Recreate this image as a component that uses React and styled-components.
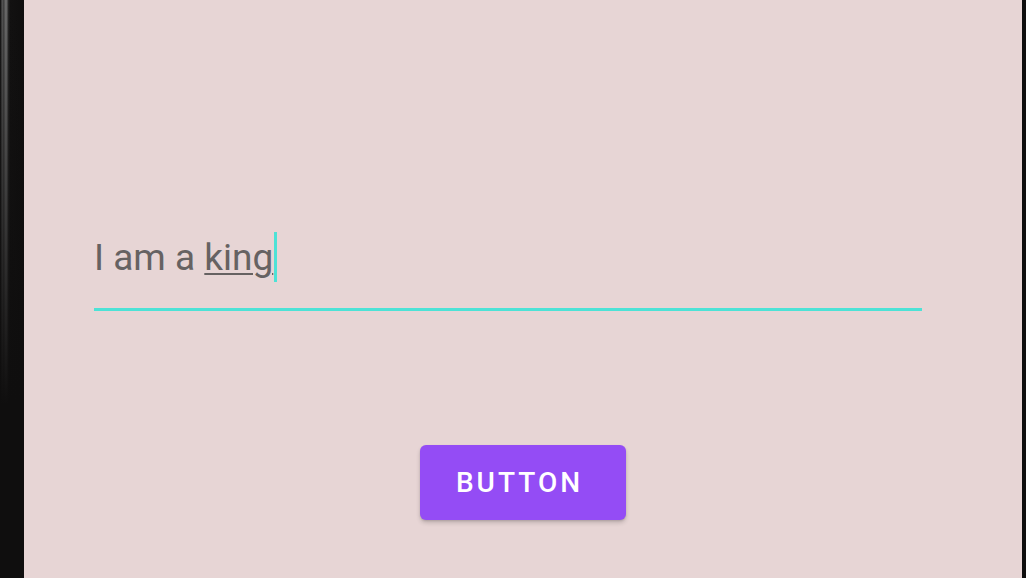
import React from "react";
import styled, { createGlobalStyle } from "styled-components";

const Global = createGlobalStyle`
  html, body { margin: 0; padding: 0; width: 1026px; height: 578px; overflow: hidden; background: #0f0e0e; }
  #root { width: 1026px; height: 578px; }
`;

const Frame = styled.div`
  display: flex;
  width: 1026px;
  height: 578px;
  background: #0f0e0e;
`;

const LeftBezel = styled.div`
  width: 24px;
  flex: none;
  background:
    linear-gradient(to bottom, rgba(15,14,14,0) 0%, #0f0e0e 70%),
    linear-gradient(to right,
      #141313 0px, #1c1c1c 1px, #5a5a5a 2px, #3a3a3a 4px, #6a6a6a 5px, #666 7px, #2a2a2a 8px, #121111 10px, #0f0e0e 24px);
  background-size: 100% 578px, 100% 578px;
`;

const RightBezel = styled.div`
  width: 4px;
  flex: none;
  background: #0f0e0e;
`;

const Screen = styled.div`
  flex: 1;
  background: #e7d5d5;
  display: flex;
  flex-direction: column;
  padding: 230px 100px 0 70px;
  font-family: Roboto, "Noto Sans", sans-serif;
`;

const Field = styled.div`
  display: flex;
  flex-direction: column;
`;

const Input = styled.div`
  display: flex;
  align-items: center;
  height: 54px;
  font-size: 37px;
  color: #666262;
  white-space: pre;
`;

const Composing = styled.span`
  text-decoration: underline;
  text-decoration-thickness: 2px;
  text-underline-offset: 3px;
`;

const Caret = styled.span`
  display: inline-block;
  width: 3px;
  height: 50px;
  background: #4de2d6;
  margin-left: 1px;
`;

const Underline = styled.div`
  height: 3px;
  background: #4de2d6;
  margin-top: 24px;
`;

const ButtonRow = styled.div`
  display: flex;
  justify-content: center;
  padding-left: 30px;
  margin-top: 134px;
`;

const Button = styled.button`
  width: 206px;
  height: 75px;
  border: none;
  border-radius: 6px;
  background: #944cf5;
  color: #ffffff;
  font-family: Roboto, "Noto Sans", sans-serif;
  font-weight: 500;
  font-size: 28px;
  letter-spacing: 3px;
  box-shadow: 0 3px 4px rgba(0,0,0,0.16), 0 1px 2px rgba(0,0,0,0.12);
  padding: 0 7px 0 0;
`;

export default function App() {
  return (
    <>
      <Global />
      <Frame>
        <LeftBezel />
        <Screen>
          <Field>
            <Input>
              I am a <Composing>king</Composing>
              <Caret />
            </Input>
            <Underline />
          </Field>
          <ButtonRow>
            <Button>BUTTON</Button>
          </ButtonRow>
        </Screen>
        <RightBezel />
      </Frame>
    </>
  );
}
